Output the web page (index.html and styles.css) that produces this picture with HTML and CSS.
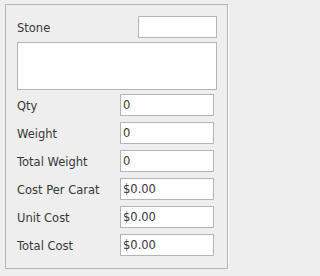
FILE: index.html
```html
<!DOCTYPE html>
<html>
<head>
<meta charset="utf-8">
<link rel="stylesheet" href="styles.css">
</head>
<body>
<div class="panel">
  <div class="stone-row">
    <span class="label">Stone</span>
    <input class="field stone-field" type="text" value="">
  </div>
  <textarea class="notes"></textarea>
  <div class="grid">
    <span class="label">Qty</span><input class="field" type="text" value="0">
    <span class="label">Weight</span><input class="field" type="text" value="0">
    <span class="label">Total Weight</span><input class="field" type="text" value="0">
    <span class="label">Cost Per Carat</span><input class="field" type="text" value="$0.00">
    <span class="label">Unit Cost</span><input class="field" type="text" value="$0.00">
    <span class="label">Total Cost</span><input class="field" type="text" value="$0.00">
  </div>
</div>
</body>
</html>
```
FILE: styles.css
```css
html, body {
  margin: 0;
  padding: 0;
  background: #eeeeee;
}
body {
  font-family: "DejaVu Sans", sans-serif;
  font-size: 11.5px;
  color: #383838;
}
.panel {
  box-sizing: border-box;
  margin: 4px 0 0 5px;
  width: 223px;
  height: 265px;
  border: 1px solid #b4b4b4;
  box-shadow: 1px 1px 0 #ffffff;
  padding: 11px 10px 0 11px;
}
.stone-row {
  display: flex;
  align-items: center;
  justify-content: space-between;
  height: 22px;
}
.label {
  display: block;
  padding-top: 2px;
}
.field {
  box-sizing: border-box;
  height: 22px;
  margin: 0;
  border: 1px solid #b4b4b4;
  background: #ffffff;
  font-family: "DejaVu Sans", sans-serif;
  font-size: 11.5px;
  color: #383838;
  padding: 0 0 0 2px;
  outline: none;
}
.stone-field {
  width: 79px;
}
.notes {
  display: block;
  box-sizing: border-box;
  width: 200px;
  height: 48px;
  margin: 4px 0 0 0;
  border: 1px solid #b4b4b4;
  background: #ffffff;
  resize: none;
  padding: 0;
  outline: none;
}
.grid {
  display: grid;
  grid-template-columns: 1fr 94px;
  grid-auto-rows: 22px;
  row-gap: 6px;
  align-items: center;
  margin-top: 4px;
  padding-right: 3px;
}
.grid .field {
  width: 94px;
}
```
